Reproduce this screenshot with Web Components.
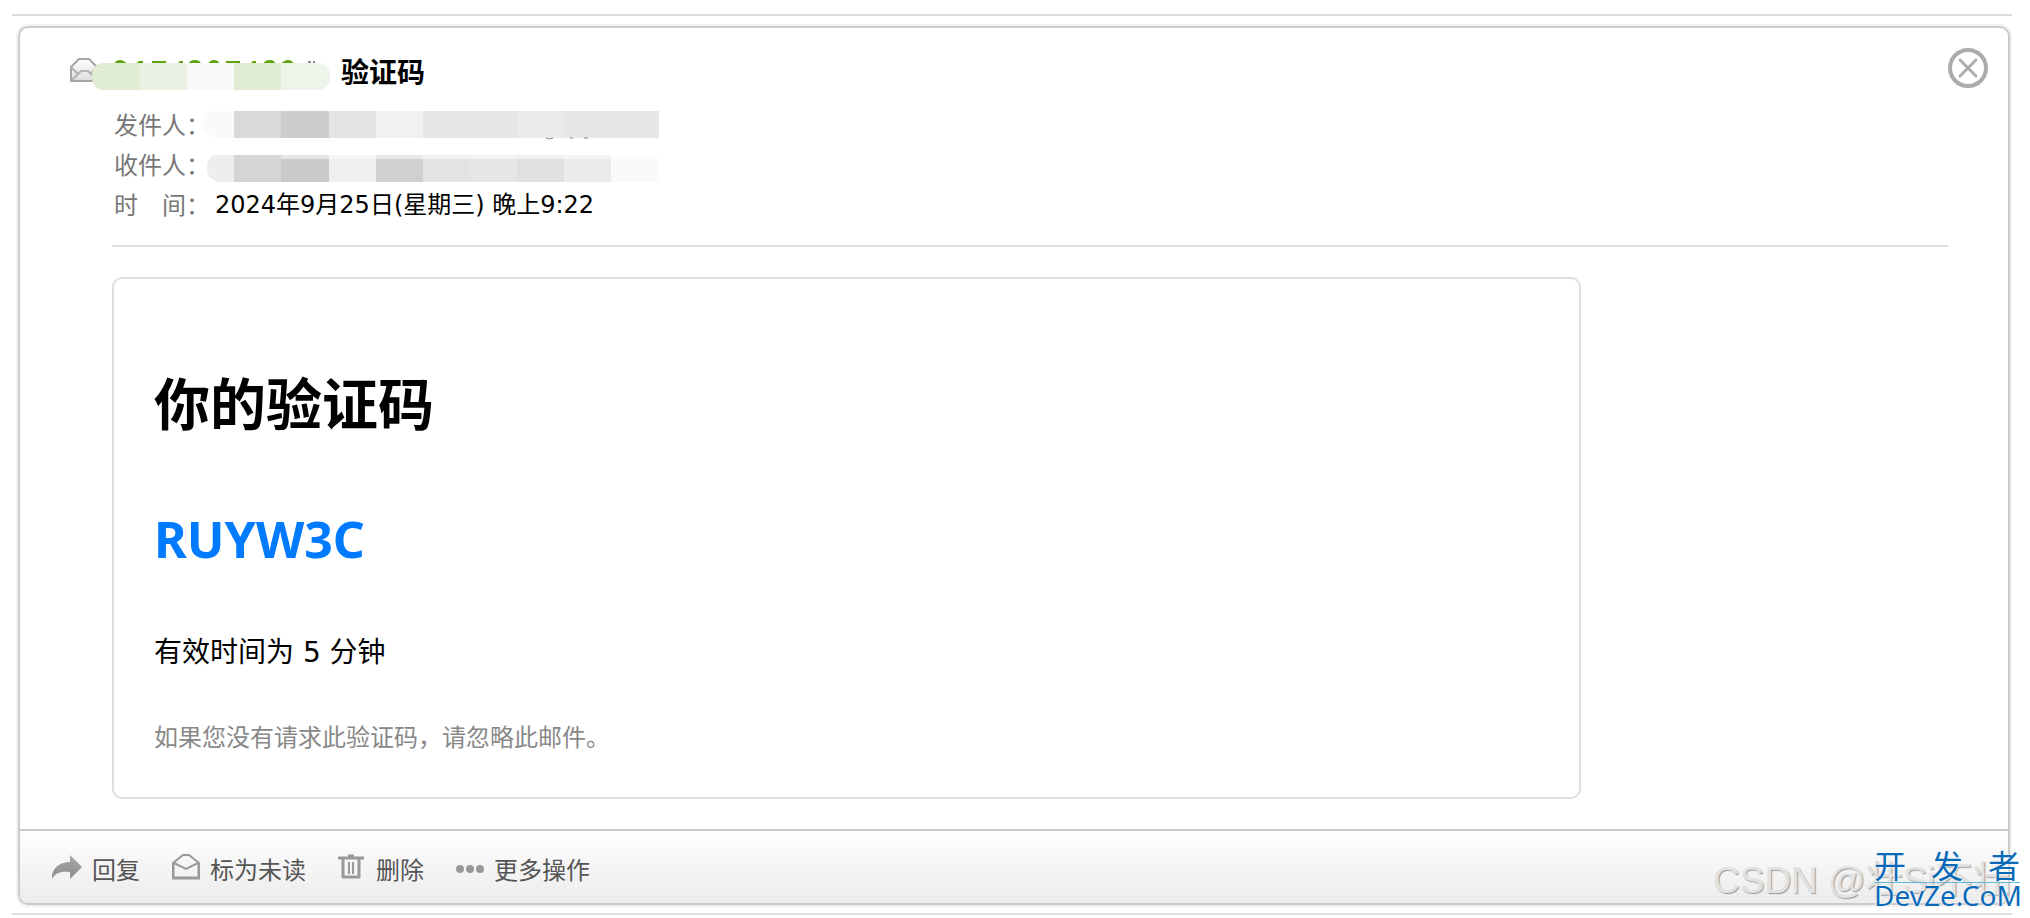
<!DOCTYPE html>
<html lang="zh-CN">
<head>
<meta charset="utf-8">
<title>验证码</title>
<style>
  body {
    margin: 0;
    background: #fff;
    color: #000;
    font-family: "Noto Sans", "Noto Sans CJK SC", sans-serif;
    font-size: 24px;
  }
</style>
</head>
<body>
<mail-page>
  <mail-card>
    <mail-header slot="header" mytitle="验证码">
      <mail-field label="发件人："><mosaic-strip kind="from"></mosaic-strip></mail-field>
      <mail-field label="收件人："><mosaic-strip kind="to"></mosaic-strip></mail-field>
      <mail-field label="时　间："><time datetime="2024-09-25T21:22">2024年9月25日(星期三) 晚上9:22</time></mail-field>
    </mail-header>
    <code-message mytitle="你的验证码" code="RUYW3C">
      <span>有效时间为 5 分钟</span>
      <span slot="note">如果您没有请求此验证码，请忽略此邮件。</span>
    </code-message>
    <mail-action slot="actions" icon="reply">回复</mail-action>
    <mail-action slot="actions" icon="unread">标为未读</mail-action>
    <mail-action slot="actions" icon="trash">删除</mail-action>
    <mail-action slot="actions" icon="more">更多操作</mail-action>
  </mail-card>
  <site-watermark slot="watermark"></site-watermark>
</mail-page>

<script>
class MailPage extends HTMLElement {
  constructor() {
    super();
    this.attachShadow({ mode: "open" });
    this.shadowRoot.innerHTML = `
    <style>
    :host {
      display: block;
      position: relative;
      padding: 14px 18px 2px 12px;
    }
    .line {
      height: 2px;
      background: #dedede;
    }
    .content {
      padding: 10px 2px 8px 6px;
    }
    </style>
    <div class="line"></div>
    <div class="content"><slot></slot></div>
    <div class="line"></div>
    <slot name="watermark"></slot>
    `;
  }
}

class MailCard extends HTMLElement {
  constructor() {
    super();
    this.attachShadow({ mode: "open" });
    this.shadowRoot.innerHTML = `
    <style>
    :host {
      display: block;
      border: 2px solid #cacaca;
      border-radius: 10px;
      box-shadow: 0 0 0 2px #f2f2f2;
      overflow: hidden;
    }
    .body {
      padding: 30px 60px 30px 92px;
    }
    footer {
      display: flex;
      gap: 32px;
      padding: 22px 30px 16px;
      border-top: 2px solid #cacaca;
      background: linear-gradient(#fefefe, #ececec);
    }
    </style>
    <slot name="header"></slot>
    <div class="body"><slot></slot></div>
    <footer><slot name="actions"></slot></footer>
    `;
  }
}

class MailHeader extends HTMLElement {
  constructor() {
    super();
    this.attachShadow({ mode: "open" });
    this.render();
  }

  render() {
    const mytitle = this.getAttribute("mytitle") || "";
    this.shadowRoot.innerHTML = `
    <style>
    :host {
      display: block;
      padding-top: 20px;
    }
    .top {
      display: flex;
      align-items: flex-start;
      padding: 0 20px 0 50px;
    }
    .sender {
      flex: none;
      width: 262px;
      height: 48px;
    }
    h2 {
      flex: 1;
      margin: 0 0 0 9px;
      font-size: 28px;
      line-height: 48px;
    }
    button {
      width: 40px;
      height: 40px;
      padding: 0;
      border: 0;
      background: none;
      cursor: pointer;
    }
    button svg {
      display: block;
    }
    .fields {
      margin: 0 60px 0 92px;
      padding: 9px 0 20px 2px;
      border-bottom: 2px solid #dedede;
    }
    </style>
    <div class="top">
      <svg class="sender" viewBox="0 0 262 48" aria-hidden="true">
        <defs>
          <linearGradient id="paper" x1="0" y1="0" x2="0" y2="1">
            <stop offset="0" stop-color="#fff"/>
            <stop offset="1" stop-color="#dcdcdc"/>
          </linearGradient>
          <clipPath id="pill"><rect x="22" y="15" width="238" height="27" rx="12"/></clipPath>
        </defs>
        <path d="M1 33V19L9 11H19L27 19V33Z" fill="url(#paper)" stroke="#a6a6a6" stroke-width="2"/>
        <path d="M1 19L8 26M27 19L20 26M2 32L11 23H18L27 32" fill="none" stroke="#b4b4b4" stroke-width="2"/>
        <g fill="#5fa30b">
          <path d="M44 16Q46 12 50 12T57 16Z"/>
          <path d="M65 16L69 13H73V16Z"/>
          <path d="M82 13H96V16H82Z"/>
          <path d="M107 16L110 13H113V16Z"/>
          <path d="M118 16Q120 12 125 12T131 16Z"/>
          <path d="M138 16Q140 12 144 12T150 16Z"/>
          <path d="M156 13H170V16H156Z"/>
          <path d="M180 16L183 13H186V16Z"/>
          <path d="M193 16Q195 12 200 12T205 16Z"/>
          <path d="M211 16Q214 12 218 12T224 16Z"/>
        </g>
        <path d="M238 14H241M243 14H245" stroke="#888" stroke-width="2"/>
        <g clip-path="url(#pill)">
          <rect x="22" y="15" width="48" height="27" fill="#e0ecd4"/>
          <rect x="70" y="15" width="47" height="27" fill="#e9f1e2"/>
          <rect x="117" y="15" width="47" height="27" fill="#fafafa"/>
          <rect x="164" y="15" width="47" height="27" fill="#dfebd3"/>
          <rect x="211" y="15" width="49" height="27" fill="#eef4ea"/>
        </g>
      </svg>
      <h2>${mytitle}</h2>
      <button type="button" aria-label="关闭">
        <svg width="40" height="40" viewBox="0 0 40 40" fill="none" stroke="#acacac">
          <circle cx="20" cy="20" r="18" stroke-width="4"/>
          <path d="M12 12L28 28M28 12L12 28" stroke-width="3" stroke-linecap="round"/>
        </svg>
      </button>
    </div>
    <div class="fields"><slot></slot></div>
    `;
  }
}

class MailField extends HTMLElement {
  constructor() {
    super();
    this.attachShadow({ mode: "open" });
    this.shadowRoot.innerHTML = `
    <style>
    :host {
      display: flex;
      height: 40px;
      line-height: 40px;
      white-space: nowrap;
    }
    .label {
      width: 89px;
      color: #777;
    }
    ::slotted(time) {
      margin-left: 12px;
      font-family: "DejaVu Sans", "Noto Sans CJK SC", sans-serif;
    }
    </style>
    <span class="label">${this.getAttribute("label")}</span>
    <slot></slot>
    `;
  }
}

// pixelated address, 47px per block
class MosaicStrip extends HTMLElement {
  constructor() {
    super();
    this.attachShadow({ mode: "open" });
    this.render();
  }

  render() {
    const from = this.getAttribute("kind") === "from";
    const colors = from
      ? ["#fafafa", "#d9d9d9", "#cdcdcd", "#e4e4e4", "#f1f1f1", "#e5e5e5", "#e6e6e6", "#ebebeb", "#e7e7e7", "#e7e7e7"]
      : ["#eeeeee", "#d5d5d5", "#cacaca", "#efefef", "#d0d0d0", "#e3e3e3", "#e6e6e6", "#e0e0e0", "#ebebeb", "#fafafa"];
    const blocks = colors.map((color, i) => {
      const x = i === 0 ? 0 : 31 + (i - 1) * 47 + (i > 2 ? 1 : 0);
      return `<rect x="${x}" y="0" width="48" height="40" fill="${color}"/>`;
    }).join("");
    const clip = from
      ? `<path d="M12 6H456V33H12Q0 30 0 20Q0 6 12 6Z"/>`
      : `<path d="M14 10H456V37H16Q4 34 4 24Q4 10 14 10Z"/>`;
    const extra = from
      ? `<path d="M343 33Q347 35 350 33M367 33H370M381 33H385" fill="none" stroke="#888" stroke-width="1"/>`
      : `<rect x="78" y="10" width="378" height="4" fill="#fff" opacity="0.5" clip-path="url(#shape)"/>`;
    this.shadowRoot.innerHTML = `
    <style>
    :host, svg {
      display: block;
    }
    </style>
    <svg width="456" height="40" viewBox="0 0 456 40" aria-hidden="true">
      <clipPath id="shape">${clip}</clipPath>
      <g clip-path="url(#shape)">${blocks}</g>
      ${extra}
    </svg>
    `;
  }
}

class CodeMessage extends HTMLElement {
  constructor() {
    super();
    this.attachShadow({ mode: "open" });
    this.shadowRoot.innerHTML = `
    <style>
    :host {
      display: block;
      box-sizing: border-box;
      max-width: 1469px;
      padding: 40px;
      border: 2px solid #dedede;
      border-radius: 10px;
    }
    h1 {
      margin: 48px 0 68px;
      font-size: 56px;
      line-height: 72px;
    }
    .code {
      margin: 0 0 62px;
      color: #007bff;
      font-size: 50px;
      font-weight: bold;
      line-height: 64px;
    }
    p {
      margin: 0;
      line-height: 40px;
    }
    .text {
      margin-bottom: 44px;
      font-family: "DejaVu Sans", "Noto Sans CJK SC", sans-serif;
      font-size: 28px;
    }
    .note {
      color: #888;
    }
    </style>
    <h1>${this.getAttribute("mytitle")}</h1>
    <p class="code">${this.getAttribute("code")}</p>
    <p class="text"><slot></slot></p>
    <p class="note"><slot name="note"></slot></p>
    `;
  }
}

const icons = {
  reply: `<svg width="32" height="28" viewBox="0 0 32 28">
    <defs><linearGradient id="g" x1="0" y1="0" x2="0" y2="1"><stop offset="0" stop-color="#a8a8a8"/><stop offset="1" stop-color="#8c8c8c"/></linearGradient></defs>
    <path d="M20 2L32 14L20 26V19C11 18 5 20 2 26C1 16 9 9 20 9Z" fill="url(#g)"/></svg>`,
  unread: `<svg width="28" height="28" viewBox="0 0 28 28" fill="none" stroke="#999">
    <path d="M1 25V10L11 2H17L27 10V25Z" stroke-width="2" stroke-linejoin="round"/>
    <path d="M1 10V25H27V10" stroke-width="3"/>
    <path d="M2 10L14 16L26 10" stroke-width="2"/></svg>`,
  trash: `<svg width="28" height="28" viewBox="0 0 28 28" fill="none" stroke="#999">
    <path d="M0 5H26M10 3H16" stroke-width="3"/>
    <path d="M5 6V24H21V6" stroke-width="3" stroke-linejoin="round"/>
    <path d="M11 9V21M15 9V21" stroke-width="2"/></svg>`,
  more: `<svg width="28" height="28" viewBox="0 0 28 28" fill="#999">
    <circle cx="4" cy="16" r="4"/><circle cx="14" cy="16" r="4"/><circle cx="24" cy="16" r="4"/></svg>`
};

class MailAction extends HTMLElement {
  constructor() {
    super();
    this.attachShadow({ mode: "open" });
    this.shadowRoot.innerHTML = `
    <style>
    :host {
      display: block;
    }
    button {
      display: flex;
      align-items: flex-start;
      gap: 10px;
      padding: 0;
      border: 0;
      background: none;
      color: #555;
      font: inherit;
      line-height: 34px;
      white-space: nowrap;
      cursor: pointer;
    }
    svg {
      flex: none;
    }
    </style>
    <button type="button">${icons[this.getAttribute("icon")]}<span><slot></slot></span></button>
    `;
  }
}

class SiteWatermark extends HTMLElement {
  constructor() {
    super();
    this.attachShadow({ mode: "open" });
    this.shadowRoot.innerHTML = `
    <style>
    :host {
      position: absolute;
      right: 4px;
      bottom: 0;
      width: 313px;
      height: 60px;
      pointer-events: none;
      white-space: nowrap;
    }
    .author {
      color: #e2e2e2;
      font-family: "Liberation Sans", "Noto Sans CJK SC", sans-serif;
      font-size: 37px;
      line-height: 48px;
      text-shadow: 1px 1px 1px #999;
    }
    .site {
      position: absolute;
      right: 6px;
      bottom: 10px;
      width: 146px;
      color: #0b6ab8;
      text-shadow: 0 0 2px #fff, 0 0 2px #fff;
    }
    .name {
      display: flex;
      justify-content: space-between;
      border-bottom: 1px solid #63b9dc;
      font-size: 32px;
      line-height: 32px;
    }
    .domain {
      font-size: 28px;
      line-height: 24px;
    }
    </style>
    <div class="author">CSDN @壮Si不壮</div>
    <div class="site">
      <div class="name"><span>开</span><span>发</span><span>者</span></div>
      <div class="domain">DevZe.CoM</div>
    </div>
    `;
  }
}

customElements.define("mail-page", MailPage);
customElements.define("mail-card", MailCard);
customElements.define("mail-header", MailHeader);
customElements.define("mail-field", MailField);
customElements.define("mosaic-strip", MosaicStrip);
customElements.define("code-message", CodeMessage);
customElements.define("mail-action", MailAction);
customElements.define("site-watermark", SiteWatermark);
</script>
</body>
</html>
